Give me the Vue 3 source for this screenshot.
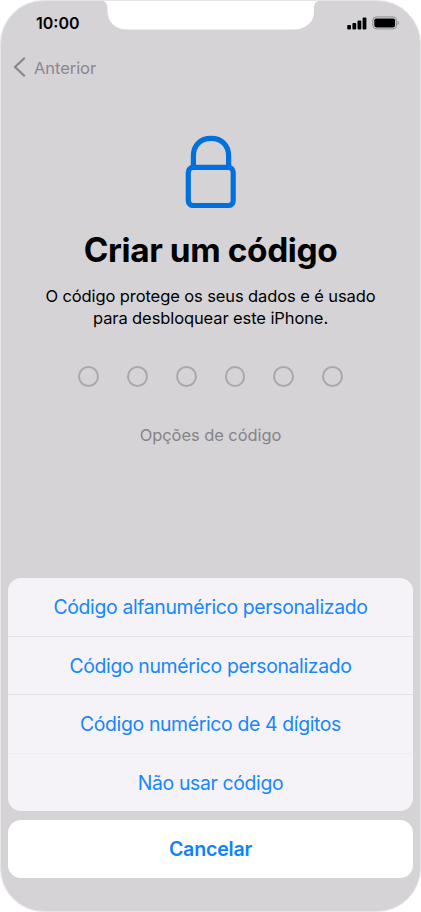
<template>
  <main class="screen">
    <!-- notch, drawn over the status bar -->
    <svg class="notch" viewBox="0 0 221 30" aria-hidden="true">
      <path d="M0 0C5 .5 7.500 3 7.500 9V12C8 22 15 29.500 27 29.500H193C206 29.500 214 22 214 12V7C214 3 217 .8 221 0Z" fill="#fff" />
    </svg>

    <header class="status-bar">
      <span class="time">10:00</span>
      <div class="status-icons">
        <svg class="signal" width="20" height="13" viewBox="0 0 20 13" aria-hidden="true">
          <rect x="0.200" y="8" width="3.800" height="4.500" rx="1" />
          <rect x="5.400" y="6" width="3.800" height="6.500" rx="1" />
          <rect x="10.500" y="3.500" width="3.800" height="9" rx="1" />
          <rect x="15.600" y="0.500" width="3.800" height="12" rx="1" />
        </svg>
        <svg class="battery" width="28" height="14" viewBox="0 0 28 14" aria-hidden="true">
          <rect x="0.800" y="0.900" width="23.800" height="12" rx="3.600" fill="none" stroke="#8f8d91" stroke-width="1" />
          <rect x="2.300" y="2.400" width="20.800" height="9" rx="1.800" />
          <path d="M25.800 4.900C27.300 5.400 27.300 8.400 25.800 8.900Z" fill="#8f8d91" />
        </svg>
      </div>
    </header>

    <nav class="nav-bar">
      <button class="back" type="button">
        <svg width="13" height="20" viewBox="0 0 13 20" aria-hidden="true">
          <path d="M11 1.500L2 10L11 18.500" />
        </svg>
        <span class="back-label">Anterior</span>
      </button>
    </nav>

    <section class="content">
      <svg class="lock" width="52" height="74" viewBox="0 0 52 74" aria-hidden="true">
        <path d="M8.400 33V21C8.400 10 15.500 3.400 26 3.400S43.600 10 43.600 21V33" />
        <rect x="3.300" y="32.400" width="44.900" height="38.100" rx="4.800" />
      </svg>
      <h1 class="title">Criar um código</h1>
      <p class="description">
        O código protege os seus dados e é usado<br />
        para desbloquear este iPhone.
      </p>
      <div class="digits">
        <span v-for="n in 6" :key="n" class="digit"></span>
      </div>
      <button class="options-link" type="button">Opções de código</button>
    </section>

    <section class="action-sheet">
      <div class="group">
        <button v-for="option in options" :key="option" class="action" type="button">
          {{ option }}
        </button>
      </div>
      <button class="cancel" type="button">Cancelar</button>
    </section>
  </main>
</template>

<script setup>
const options = [
  'Código alfanumérico personalizado',
  'Código numérico personalizado',
  'Código numérico de 4 dígitos',
  'Não usar código',
]
</script>

<style>
body {
  margin: 0;
  background: #fff;
}
</style>

<style scoped>
.screen {
  position: relative;
  display: flex;
  flex-direction: column;
  box-sizing: border-box;
  width: 421px;
  height: 912px;
  overflow: hidden;
  border: 1px solid #e6e5e7;
  border-radius: 44px;
  background: #d5d3d6;
  color: #000;
  font-family: Inter, "Liberation Sans", sans-serif;
}

button {
  padding: 0;
  border: 0;
  background: none;
  font: inherit;
  letter-spacing: inherit;
  color: inherit;
}

.notch {
  position: absolute;
  top: -1px;
  left: 99px;
  width: 221px;
  height: 30px;
}

.status-bar {
  display: flex;
  justify-content: space-between;
  align-items: center;
  height: 44px;
  padding: 0 20px 0 35px;
}

.time {
  font-size: 16px;
  font-weight: 600;
  line-height: 20px;
}

.status-icons {
  display: flex;
  align-items: center;
  gap: 5px;
}

.nav-bar {
  display: flex;
  align-items: center;
  height: 44px;
  padding-left: 12px;
}

.back {
  display: flex;
  align-items: center;
  gap: 8px;
  color: #8a888c;
  font-size: 16.500px;
  line-height: 22px;
  letter-spacing: -0.06px;
}

.back-label {
  padding-top: 1px;
}

.back path {
  fill: none;
  stroke: #8a888c;
  stroke-width: 2.4;
  stroke-linecap: round;
  stroke-linejoin: round;
}

.content {
  display: flex;
  flex-direction: column;
  align-items: center;
  padding-top: 46px;
}

.lock {
  fill: none;
  stroke: #0070df;
  stroke-width: 5.2;
}

.title {
  margin: 20px 0 0;
  font-size: 33.400px;
  font-weight: 700;
  line-height: 42px;
  letter-spacing: -0.4px;
  white-space: nowrap;
}

.description {
  margin: 14px 0 0;
  font-size: 16.500px;
  line-height: 22.400px;
  letter-spacing: -0.1px;
  text-align: center;
  white-space: nowrap;
}

.digits {
  display: flex;
  gap: 28px;
  margin-top: 36px;
}

.digit {
  box-sizing: border-box;
  width: 20.800px;
  height: 20.800px;
  border: 2px solid #aaa8ab;
  border-radius: 50%;
}

.options-link {
  margin-top: 37px;
  color: #858387;
  font-size: 16.500px;
  line-height: 22px;
  letter-spacing: -0.07px;
}

.action-sheet {
  display: flex;
  flex-direction: column;
  gap: 8.500px;
  margin-top: auto;
  padding: 0 7px 33.500px;
}

.group {
  display: flex;
  flex-direction: column;
  overflow: hidden;
  height: 233px;
  border-radius: 13px;
  background: #f5f3f7;
}

.action {
  flex: 1;
  box-sizing: border-box;
  padding-top: 1px;
  color: #1787fb;
  font-size: 19.400px;
  line-height: 24px;
  letter-spacing: -0.35px;
}

.action + .action {
  border-top: 1px solid #e3e1e5;
}

.action:last-child {
  border-top-color: #efedf1;
}

.cancel {
  height: 58px;
  border-radius: 13px;
  background: #fff;
  color: #0f82ff;
  font-size: 19.600px;
  font-weight: 600;
  letter-spacing: -0.2px;
}
</style>
